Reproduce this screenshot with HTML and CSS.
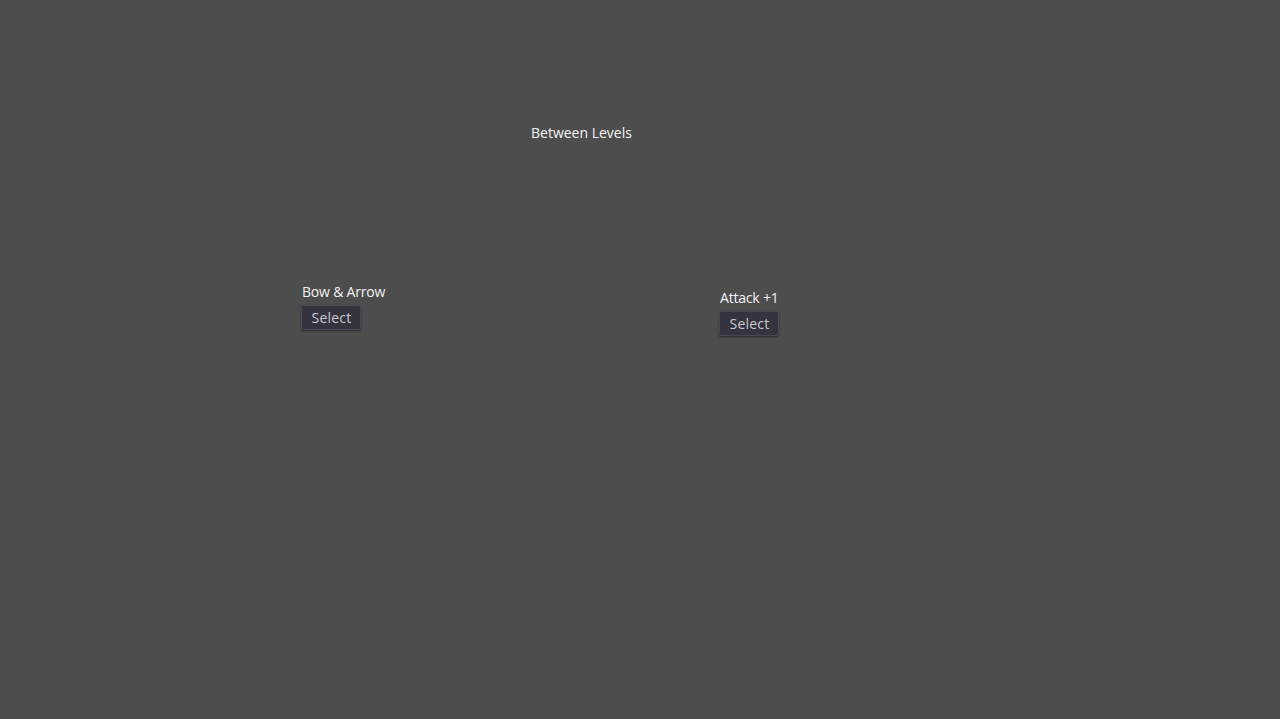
FILE: index.html
```html
<!DOCTYPE html>
<html>
<head>
<meta charset="utf-8">
<link rel="stylesheet" href="styles.css">
</head>
<body>
<div class="screen">
  <div class="title">Between Levels</div>
  <div class="choices">
    <div class="choice first">
      <div class="label">Bow &amp; Arrow</div>
      <button class="btn">Select</button>
    </div>
    <div class="choice second">
      <div class="label">Attack +1</div>
      <button class="btn">Select</button>
    </div>
  </div>
</div>
</body>
</html>
```
FILE: styles.css
```css
html, body {
  margin: 0;
  padding: 0;
  background: #4d4d4d;
  height: 100%;
}
.screen {
  font-family: "Open Sans", "Noto Sans", sans-serif;
  font-size: 14px;
  line-height: 18px;
  color: #f2f2f2;
  padding-top: 124px;
}
.title {
  padding-left: 531px;
}
.choices {
  display: flex;
  align-items: flex-start;
  margin-top: 141px;
}
.choice {
  display: flex;
  flex-direction: column;
  align-items: flex-start;
  gap: 4px;
  width: 100px;
}
.label {
  letter-spacing: -0.2px;
}
.first {
  margin-left: 302px;
}
.second {
  margin-left: 318px;
  margin-top: 6px;
}
.btn {
  margin-left: -1px;
  width: 60px;
  height: 25px;
  padding: 0 0 0 1px;
  font-family: inherit;
  font-size: 14px;
  letter-spacing: 0.2px;
  color: #c9c8cf;
  background: #35333e;
  border: 1px solid #4a4852;
  border-radius: 2px;
  box-shadow: 0 1px 2px rgba(0,0,0,0.45);
}
```
